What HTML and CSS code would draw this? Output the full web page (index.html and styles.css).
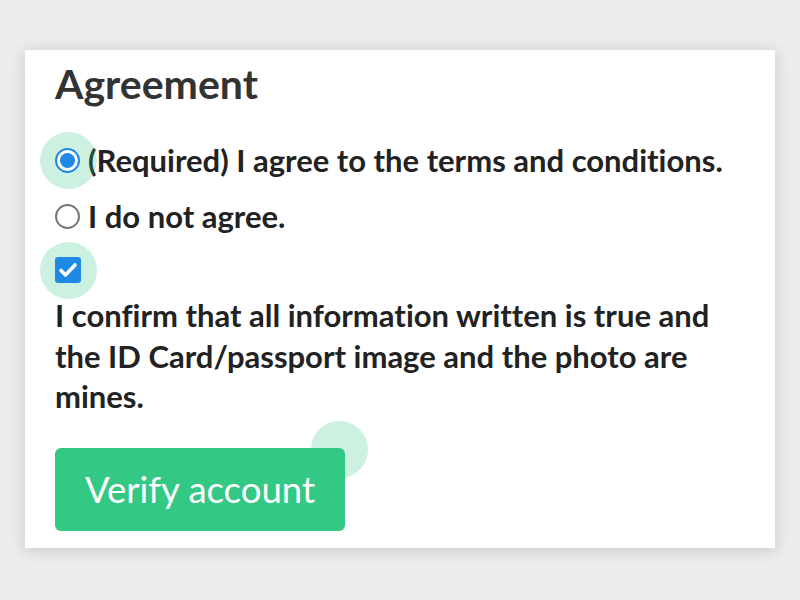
FILE: index.html
```html
<!DOCTYPE html>
<html>
<head>
<meta charset="utf-8">
<link rel="stylesheet" href="styles.css">
</head>
<body>
<div class="card">
  <h1 class="title">Agreement</h1>
  <div class="option first">
    <span class="control">
      <span class="halo"></span>
      <span class="radio checked"></span>
    </span>
    <span class="label">(Required) I agree to the terms and conditions.</span>
  </div>
  <div class="option">
    <span class="control">
      <span class="radio"></span>
    </span>
    <span class="label">I do not agree.</span>
  </div>
  <div class="option check-row">
    <span class="control">
      <span class="halo"></span>
      <span class="checkbox">
        <svg width="26" height="26" viewBox="0 0 26 26"><path d="M6 13.5 L10.5 18 L20 8" fill="none" stroke="#fff" stroke-width="3.6" stroke-linecap="round" stroke-linejoin="round"/></svg>
      </span>
    </span>
  </div>
  <p class="confirm">I confirm that all information written is true and the ID Card/passport image and the photo are mines.</p>
  <div class="actions">
    <button class="verify">Verify account<span class="halo btn-halo"></span></button>
  </div>
</div>
</body>
</html>
```
FILE: styles.css
```css
html, body {
  margin: 0;
  padding: 0;
  background: #ececec;
  width: 800px;
  height: 600px;
  overflow: hidden;
}
body {
  font-family: "Lato", "Liberation Sans", sans-serif;
  font-variant-ligatures: none;
  padding: 50px 25px 0 25px;
  box-sizing: border-box;
}
.card {
  background: #fff;
  height: 498px;
  box-sizing: border-box;
  padding: 14px 30px 0 30px;
  box-shadow: 0 2px 14px rgba(0,0,0,0.16);
}
.title {
  margin: 0;
  font-size: 41px;
  font-weight: 700;
  color: #333;
  line-height: 40px;
}
.option {
  display: flex;
  align-items: center;
  height: 56px;
}
.option.first { margin-top: 28px; }
.option.check-row { height: 51px; }
.control {
  position: relative;
  width: 33px;
  height: 26px;
  display: flex;
  align-items: center;
}
.halo {
  position: absolute;
  width: 57px;
  height: 57px;
  border-radius: 50%;
  background: rgba(51, 200, 131, 0.25);
  left: -15px;
  top: -15px;
}
.radio {
  position: relative;
  width: 21px;
  height: 21px;
  border: 2px solid #777;
  border-radius: 50%;
  box-sizing: content-box;
  background: #fff;
}
.radio.checked {
  border-color: #1e88e5;
}
.radio.checked::after {
  content: "";
  position: absolute;
  left: 3px;
  top: 3px;
  width: 15px;
  height: 15px;
  border-radius: 50%;
  background: #1e88e5;
}
.checkbox {
  position: relative;
  width: 26px;
  height: 26px;
  border-radius: 3px;
  background: #1e88e5;
  display: block;
}
.checkbox svg { display: block; }
.label {
  font-size: 31px;
  font-weight: 700;
  color: #222;
}
.confirm {
  margin: 0;
  font-size: 31px;
  font-weight: 700;
  line-height: 40.5px;
  color: #222;
}
.actions {
  margin-top: 31px;
}
.verify {
  position: relative;
  display: block;
  width: 290px;
  height: 83px;
  border: none;
  border-radius: 6px;
  background: #33c883;
  color: #fff;
  font-family: "Lato", "Liberation Sans", sans-serif;
  font-size: 36.5px;
  font-weight: 400;
  padding: 0;
}
.btn-halo {
  left: 256px;
  top: -27px;
}
```
